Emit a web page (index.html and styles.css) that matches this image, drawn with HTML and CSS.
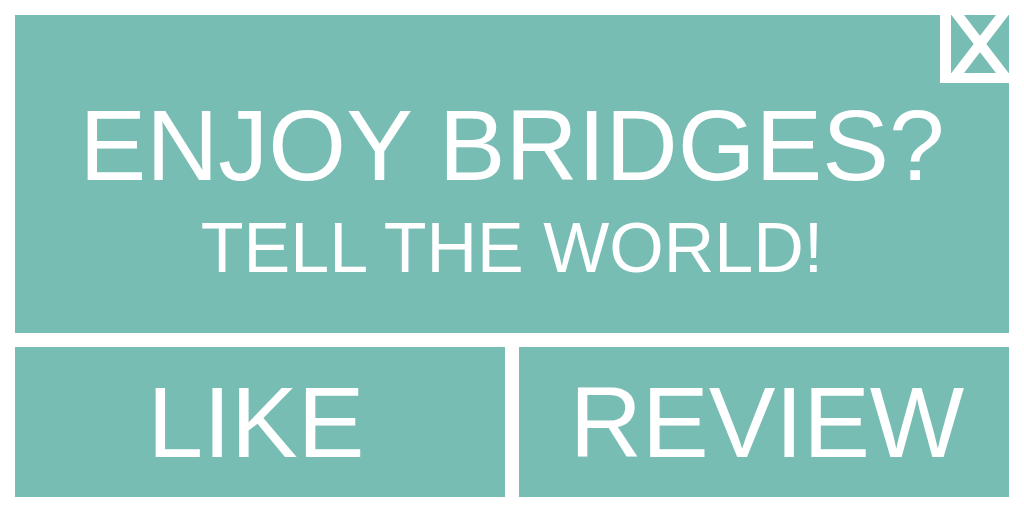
FILE: index.html
```html
<!DOCTYPE html>
<html lang="en">
<head>
<meta charset="utf-8">
<title>Enjoy Bridges?</title>
<link rel="stylesheet" href="styles.css">
</head>
<body>
<div class="card">
  <section class="promo">
    <h1 class="promo-title">ENJOY BRIDGES?</h1>
    <p class="promo-sub">TELL THE WORLD!</p>
    <button class="close" aria-label="Close">
      <svg width="69" height="68" viewBox="0 0 69 68" aria-hidden="true">
        <defs>
          <clipPath id="inner"><rect x="11" y="0" width="58" height="58"/></clipPath>
        </defs>
        <rect width="69" height="68" fill="#fff"/>
        <rect x="11" y="0" width="58" height="58" fill="#77bdb4"/>
        <g clip-path="url(#inner)" stroke="#fff" stroke-width="10">
          <line x1="10" y1="-10" x2="70" y2="68"/>
          <line x1="70" y1="-10" x2="10" y2="68"/>
        </g>
      </svg>
    </button>
  </section>
  <div class="actions">
    <a class="action action-like" href="#">LIKE</a>
    <a class="action action-review" href="#">REVIEW</a>
  </div>
</div>
</body>
</html>
```

FILE: styles.css
```css
html, body {
  margin: 0;
  padding: 0;
  background: #fff;
}

body {
  font-family: "Liberation Sans", Arial, sans-serif;
  color: #fff;
}

.card {
  width: 994px;
  padding: 15px;
  display: flex;
  flex-direction: column;
  gap: 14px;
}

.promo {
  position: relative;
  height: 318px;
  box-sizing: border-box;
  padding-top: 80px;
  background: #77bdb4;
  text-align: center;
}

.promo-title {
  margin: 0;
  font-size: 100px;
  font-weight: 400;
  line-height: 100px;
}

.promo-sub {
  margin: 18px 0 0;
  font-size: 70px;
  line-height: 70px;
}

.close {
  position: absolute;
  top: 0;
  right: 0;
  width: 69px;
  height: 68px;
  padding: 0;
  border: 0;
  background: none;
  display: block;
}

.close svg {
  display: block;
}

.actions {
  display: grid;
  grid-template-columns: 1fr 1fr;
  gap: 14px;
  height: 150px;
}

.action {
  display: flex;
  align-items: center;
  justify-content: center;
  background: #77bdb4;
  color: #fff;
  text-decoration: none;
  font-size: 100px;
  line-height: 1;
}

.action-like {
  padding-right: 8px;
}

.action-review {
  padding-left: 6px;
}
```
